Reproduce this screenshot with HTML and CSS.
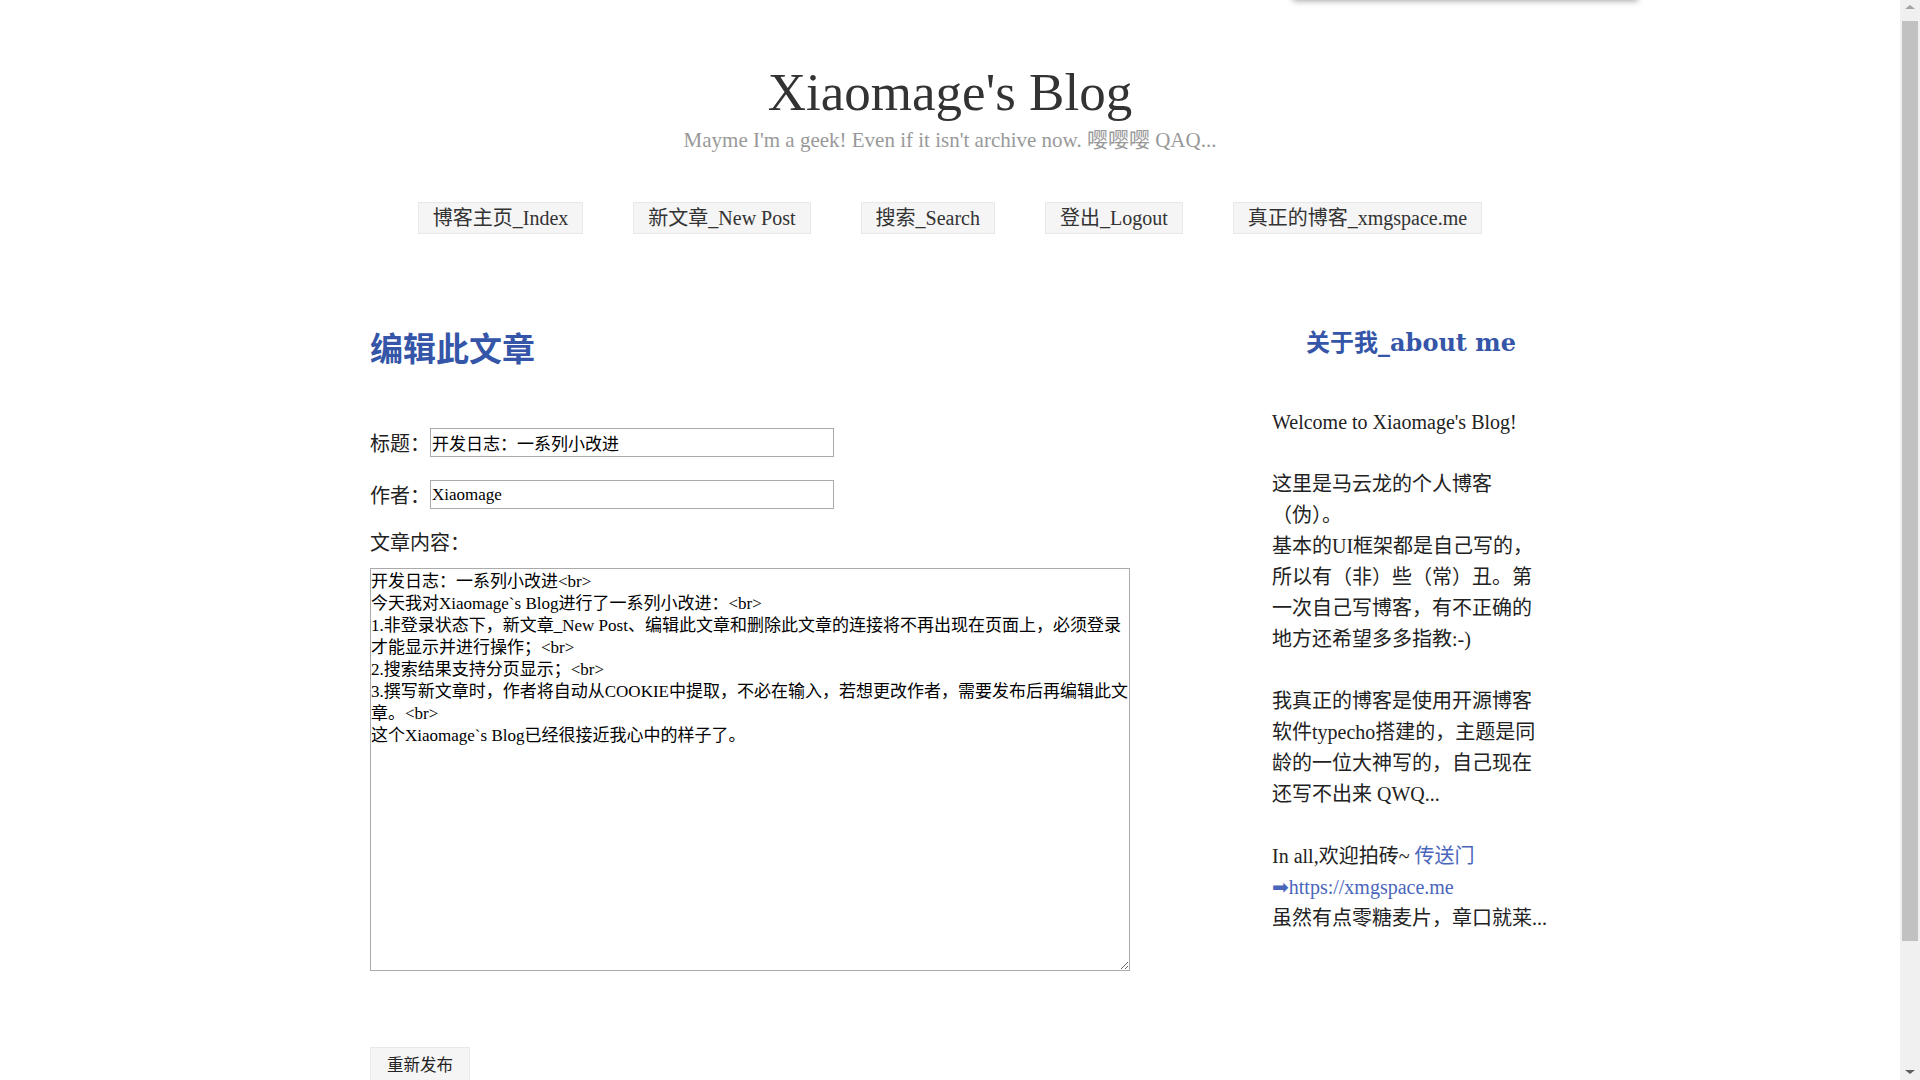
FILE: index.html
```html
<!DOCTYPE html>
<html lang="zh-CN">
<head>
<meta charset="utf-8">
<title>Xiaomage's Blog - 编辑此文章</title>
<link rel="stylesheet" href="styles.css">
</head>
<body>
<div class="peek"></div>
<div class="fake-scrollbar" aria-hidden="true">
  <div class="sb-btn sb-up"><span class="tri-up"></span></div>
  <div class="sb-track"><div class="sb-thumb"></div></div>
  <div class="sb-btn sb-down"><span class="tri-down"></span></div>
</div>
<header class="site-head">
  <h1 class="site-title">Xiaomage's Blog</h1>
  <p class="site-desc">Mayme I'm a geek! Even if it isn't archive now. 嘤嘤嘤 QAQ...</p>
  <nav class="site-nav">
    <a class="nav-item" href="#">博客主页_Index</a>
    <a class="nav-item" href="#">新文章_New Post</a>
    <a class="nav-item" href="#">搜索_Search</a>
    <a class="nav-item" href="#">登出_Logout</a>
    <a class="nav-item" href="#">真正的博客_xmgspace.me</a>
  </nav>
</header>
<div class="page">
  <main class="main">
    <h2 class="page-heading">编辑此文章</h2>
    <form class="edit-form">
      <div class="field"><label class="field-name">标题：</label><input class="text-input" type="text" value="开发日志：一系列小改进"></div>
      <div class="field"><label class="field-name">作者：</label><input class="text-input" type="text" value="Xiaomage"></div>
      <div class="field-label">文章内容：</div>
      <textarea class="content-input">开发日志：一系列小改进&lt;br&gt;
今天我对Xiaomage`s Blog进行了一系列小改进：&lt;br&gt;
1.非登录状态下，新文章_New Post、编辑此文章和删除此文章的连接将不再出现在页面上，必须登录才能显示并进行操作；&lt;br&gt;
2.搜索结果支持分页显示；&lt;br&gt;
3.撰写新文章时，作者将自动从COOKIE中提取，不必在输入，若想更改作者，需要发布后再编辑此文章。&lt;br&gt;
这个Xiaomage`s Blog已经很接近我心中的样子了。</textarea>
      <button class="submit-btn" type="button">重新发布</button>
    </form>
  </main>
  <aside class="sidebar">
    <h3 class="side-heading">关于我_about me</h3>
    <p class="side-text">Welcome to Xiaomage's Blog!<br><br>这里是马云龙的个人博客<br>（伪）。<br>基本的UI框架都是自己写的，<br>所以有（非）些（常）丑。第<br>一次自己写博客，有不正确的<br>地方还希望多多指教:-)<br><br>我真正的博客是使用开源博客<br>软件typecho搭建的，主题是同<br>龄的一位大神写的，自己现在<br>还写不出来 QWQ...<br><br>In all,欢迎拍砖~ <a class="side-link" href="#">传送门<br><span class="arrow">➡</span>https://xmgspace.me</a><br>虽然有点零糖麦片，章口就莱...</p>
  </aside>
</div>
</body>
</html>
```
FILE: styles.css
```css
body {
  margin: 0 20px 0 0;
  background: #fff;
  color: #222;
  font-family: "Liberation Serif", "Noto Sans CJK SC", serif;
}

.fake-scrollbar {
  position: fixed;
  top: 0;
  right: 0;
  bottom: 0;
  width: 20px;
  background: #f0f0f0;
  display: flex;
  flex-direction: column;
  z-index: 10;
}

.sb-btn {
  height: 20px;
  display: flex;
  align-items: center;
  justify-content: center;
  flex: none;
}

.tri-up {
  width: 0;
  height: 0;
  border-left: 5px solid transparent;
  border-right: 5px solid transparent;
  border-bottom: 4px solid #a3a3a3;
  margin-top: -6px;
}

.tri-down {
  width: 0;
  height: 0;
  border-left: 5px solid transparent;
  border-right: 5px solid transparent;
  border-top: 4px solid #606060;
  margin-top: 4px;
}

.sb-track {
  flex: 1;
  padding: 1px 2px 0;
}

.sb-thumb {
  height: 920px;
  background: #c1c1c1;
}

.peek {
  position: absolute;
  top: -30px;
  left: 1293px;
  width: 345px;
  height: 30px;
  background: #fff;
  box-shadow: 0 1px 6px rgba(0, 0, 0, 0.35);
}

.site-head {
  padding-top: 62px;
  text-align: center;
}

.site-title {
  margin: 0;
  font-size: 53px;
  line-height: 60px;
  font-weight: normal;
  color: #333;
}

.site-desc {
  margin: 6px 0 0;
  font-size: 21px;
  line-height: 24px;
  color: #999;
}

.site-nav {
  display: flex;
  justify-content: center;
  gap: 50px;
  margin-top: 50px;
}

.nav-item {
  display: block;
  height: 30px;
  line-height: 30px;
  padding: 0 14px;
  border: 1px solid #e8e8e8;
  background: #f5f5f5;
  color: #333;
  font-size: 20px;
  text-decoration: none;
}

.page {
  width: 1200px;
  margin: 93px auto 0;
  padding-bottom: 140px;
  display: flex;
  justify-content: space-between;
  align-items: flex-start;
}

.main {
  padding-left: 20px;
}

.page-heading {
  margin: 0;
  font-size: 33px;
  line-height: 40px;
  font-weight: bold;
  color: #3556a8;
  font-family: "Noto Sans CJK SC", sans-serif;
}

.edit-form {
  margin-top: 61px;
}

.field {
  display: flex;
  align-items: center;
  height: 29px;
  margin-bottom: 23px;
  font-size: 20px;
}

.field-name {
  width: 60px;
}

.text-input {
  box-sizing: border-box;
  width: 404px;
  height: 29px;
  margin: 0;
  padding: 0 1px;
  border: 1px solid #aaa;
  color: #000;
  font-family: "Liberation Serif", "Noto Sans CJK SC", serif;
  font-size: 17px;
}

.field-label {
  margin-top: -4px;
  margin-bottom: 10px;
  height: 30px;
  line-height: 30px;
  font-size: 20px;
}

.content-input {
  display: block;
  box-sizing: border-box;
  width: 760px;
  height: 403px;
  margin: 0;
  padding: 2px 0 0;
  border: 1px solid #aaa;
  color: #000;
  font-family: "Liberation Serif", "Noto Sans CJK SC", serif;
  font-size: 17px;
  line-height: 22px;
}

.submit-btn {
  display: block;
  margin-top: 76px;
  height: 34px;
  padding: 0 16px;
  border: 1px solid #e8e8e8;
  background: #f5f5f5;
  color: #222;
  font-family: "Noto Sans CJK SC", sans-serif;
  font-size: 16.5px;
}

.sidebar {
  width: 278px;
}

.side-heading {
  margin: 0;
  text-align: center;
  font-family: "DejaVu Serif", "Noto Sans CJK SC", serif;
  font-size: 24px;
  line-height: 32px;
  font-weight: bold;
  color: #3556a8;
}

.side-text {
  margin: 47.5px 0 0;
  font-size: 20px;
  line-height: 31px;
  white-space: nowrap;
}

.side-link {
  color: #4a66bb;
  text-decoration: none;
}

.arrow {
  font-family: "DejaVu Sans", sans-serif;
  font-size: 20px;
}
```
